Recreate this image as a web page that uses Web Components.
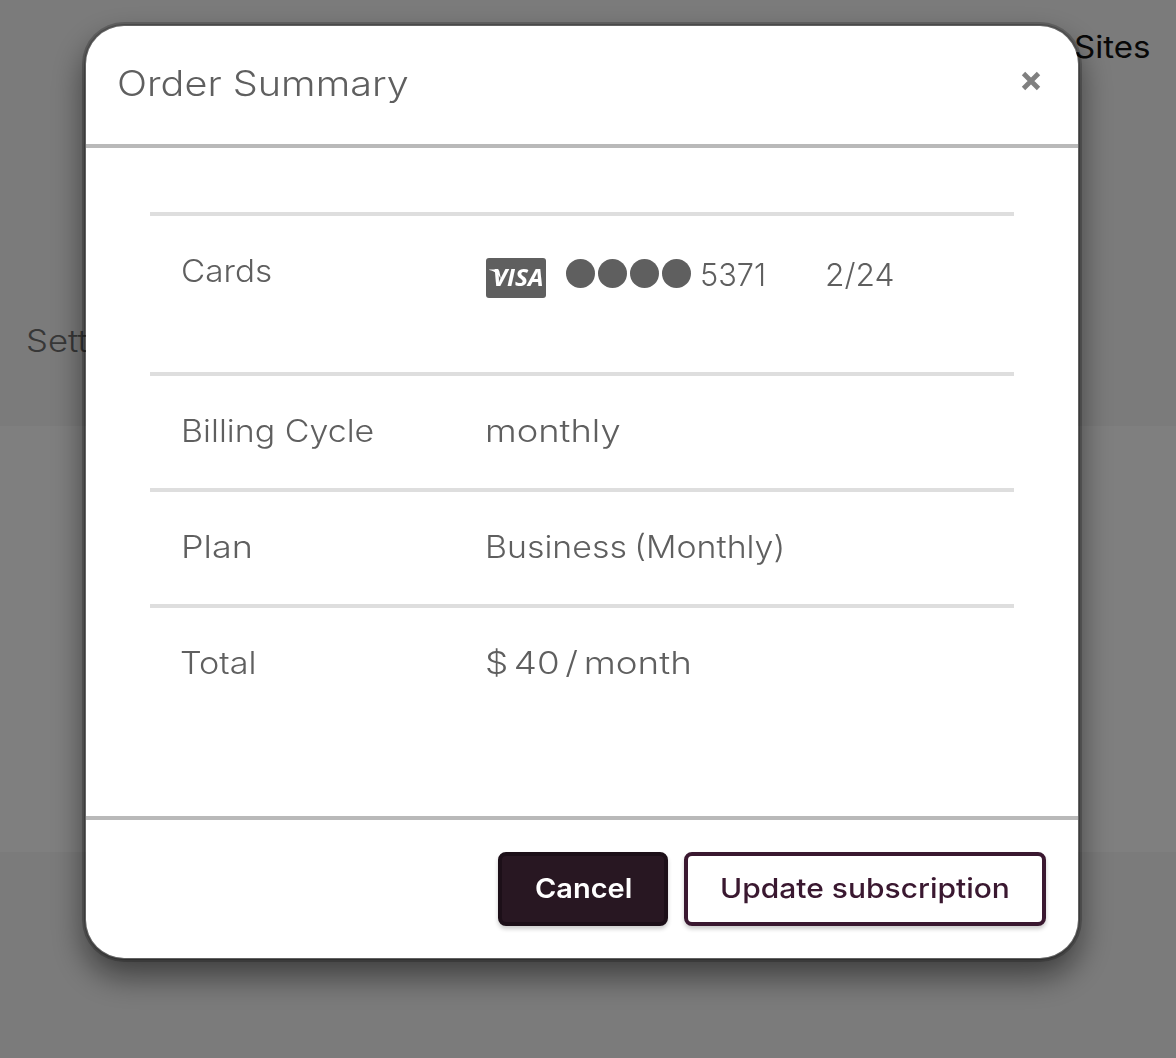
<!DOCTYPE html>
<html lang="en">
<head>
<meta charset="utf-8">
<title>Order Summary</title>
<style>
html, body { margin: 0; height: 100%; overflow: hidden; }
body { font-family: Inter, "Open Sans", "Liberation Sans", sans-serif; background: #f6f6f6; color: #5f5f5f; }
</style>
</head>
<body>
<account-page></account-page>
<order-dialog>
  <text-run slot="title" size="35" weight="300" ink="289" nudge="0.8" line="52">Order Summary</text-run>
  <summary-row label="Cards" label-ink="89" tall>
    <payment-card></payment-card>
  </summary-row>
  <summary-row label="Billing Cycle" label-ink="190"><text-run ink="133" nudge="1">monthly</text-run></summary-row>
  <summary-row label="Plan" label-ink="67"><text-run ink="295" nudge="1" word="-2">Business (Monthly)</text-run></summary-row>
  <summary-row label="Total" label-ink="73"><text-run ink="203" word="-4">$ 40 / month</text-run></summary-row>
  <action-button slot="actions" kind="solid"><text-run size="27.5" weight="600" ink="95" nudge="0.8" line="64">Cancel</text-run></action-button>
  <action-button slot="actions"><text-run size="27.5" weight="500" ink="286" nudge="0.8" line="64">Update subscription</text-run></action-button>
</order-dialog>

<script>
const pen = document.createElement('canvas').getContext('2d');

/* A line of text widened so that its drawn extent equals the `ink` attribute. */
class TextRun extends HTMLElement {
  connectedCallback() {
    if (this.shadowRoot) return;
    const size = +(this.getAttribute('size') || 31);
    const weight = this.getAttribute('weight') || 300;
    const line = this.getAttribute('line') || 48;
    const ink = +this.getAttribute('ink');
    const nudge = +(this.getAttribute('nudge') || 0);
    const word = +(this.getAttribute('word') || 0);
    const text = this.textContent;
    pen.font = `${weight} ${size}px Inter, "Open Sans", sans-serif`;
    const m = pen.measureText(text);
    const spaces = text.split(' ').length - 1;
    const drawn = m.actualBoundingBoxRight + m.actualBoundingBoxLeft + spaces * word;
    const scale = ink / drawn;
    const start = m.actualBoundingBoxLeft * scale + nudge + 0.5;
    this.attachShadow({ mode: 'open' }).innerHTML = `<style>
      :host { display: block; width: ${ink}px; white-space: nowrap; flex: none;
        font-size: ${size}px; font-weight: ${weight}; line-height: ${line}px; word-spacing: ${word}px; }
      span { display: block; width: max-content; margin-left: ${start.toFixed(2)}px;
        transform: scaleX(${scale.toFixed(4)}); transform-origin: 0 50%; }
    </style><span><slot></slot></span>`;
  }
}

class AccountPage extends HTMLElement {
  connectedCallback() {
    this.attachShadow({ mode: 'open' }).innerHTML = `<style>
      :host { display: flex; flex-direction: column; height: 100vh; }
      header { height: 426px; box-sizing: border-box; padding: 23px 27px 0 26px; background: #f6f6f6;
        display: flex; flex-direction: column; }
      nav { display: flex; justify-content: flex-end; color: #111; }
      .tab { padding-top: 246px; color: #6f6f6f; }
      main { height: 426px; background: #fff; }
      footer { flex: 1; background: #f6f6f6; }
    </style>
    <header><nav><text-run ink="74" weight="400">Sites</text-run></nav>
    <div class="tab"><text-run ink="127" nudge="0.5">Settings</text-run></div></header>
    <main></main><footer></footer>`;
  }
}

class OrderDialog extends HTMLElement {
  connectedCallback() {
    this.attachShadow({ mode: 'open' }).innerHTML = `<style>
      :host { display: flex; position: fixed; inset: 0; box-sizing: border-box; padding: 24px 96px 98px 84px;
        background: rgba(0,0,0,.5); }
      section { flex: 1; display: flex; flex-direction: column; box-sizing: border-box; background: #fff;
        background-clip: padding-box; border: 2px solid rgba(0,0,0,.2); border-radius: 40px;
        box-shadow: 0 0 0 2px rgba(0,0,0,.2), 0 16px 32px rgba(0,0,0,.5); }
      header { height: 122px; box-sizing: border-box; border-bottom: 4px solid #b9b9b9;
        display: flex; justify-content: space-between; align-items: flex-start; padding: 31px 37px 0 32px; }
      svg { display: block; margin-top: 14px; }
      .body { flex: 1; padding: 64px 64px 0; }
      footer { height: 142px; box-sizing: border-box; border-top: 4px solid #b9b9b9;
        display: flex; justify-content: flex-end; align-items: flex-start; gap: 16px; padding: 32px 32px 0; }
    </style>
    <section role="dialog">
      <header><slot name="title"></slot>
        <svg width="20" height="20" viewBox="0 0 20 20"><path d="M2.5 2.5 17.5 17.5M17.5 2.5 2.5 17.5" stroke="#808080" stroke-width="4.800" /></svg>
      </header>
      <div class="body"><slot></slot></div>
      <footer><slot name="actions"></slot></footer>
    </section>`;
  }
}

class SummaryRow extends HTMLElement {
  connectedCallback() {
    const label = this.getAttribute('label');
    const stem = /^[BP]/.test(label) ? 1 : /^T/.test(label) ? -1 : 0;
    this.attachShadow({ mode: 'open' }).innerHTML = `<style>
      :host { display: flex; box-sizing: border-box; height: 116px; border-top: 4px solid #dedede; padding: 31px 32px 0; }
      :host([tall]) { height: 160px; }
      .label { width: 304px; flex: none; }
    </style>
    <div class="label"><text-run ink="${this.getAttribute('label-ink')}" nudge="${stem}">${label}</text-run></div>
    <slot></slot>`;
  }
}

class PaymentCard extends HTMLElement {
  connectedCallback() {
    this.attachShadow({ mode: 'open' }).innerHTML = `<style>
      :host { display: flex; align-items: center; height: 48px; padding-top: 4px; }
      svg { display: block; margin: 6px 20.5px 0 0; }
      .dots { display: flex; gap: 3px; margin: -3px 10px 0 -0.3px; }
      i { width: 29px; height: 29px; border-radius: 50%; background: #5f5f5f; }
      .date { margin-left: 63px; }
    </style>
    <svg width="60" height="40" viewBox="0 0 60 40" role="img">
      <rect width="60" height="40" rx="3" fill="#5f5f5f"/>
      <path d="M3.2 11.4h7.6c1.5 0 2.3.8 2.6 2.2l1.5 7.4C12.7 16.2 9.2 13.1 3.2 11.9z" fill="#fff"/>
      <text x="6.5" y="28.4" textLength="51" lengthAdjust="spacingAndGlyphs" font-family="Open Sans" font-size="24" font-weight="700" font-style="italic" fill="#fff">VISA</text>
    </svg>
    <div class="dots"><i></i><i></i><i></i><i></i></div>
    <text-run ink="62">5371</text-run><text-run class="date" ink="66">2/24</text-run>`;
  }
}

class ActionButton extends HTMLElement {
  connectedCallback() {
    this.attachShadow({ mode: 'open' }).innerHTML = `<style>
      :host { display: block; }
      button { display: flex; align-items: flex-start; font: inherit; text-align: left; box-sizing: border-box; height: 74px; margin: 0; padding: 0 35px 0 33px;
        border: 4px solid #3a1830; border-radius: 8px; background: #fff; color: #3a1830;
        box-shadow: 0 3px 4px rgba(0,0,0,.2); }
      :host([kind=solid]) button { background: #281722; border-color: #1c0f18; color: #fff; padding: 0 34px 0 33px; }
    </style><button><slot></slot></button>`;
  }
}

customElements.define('text-run', TextRun);
customElements.define('account-page', AccountPage);
customElements.define('order-dialog', OrderDialog);
customElements.define('summary-row', SummaryRow);
customElements.define('payment-card', PaymentCard);
customElements.define('action-button', ActionButton);
</script>
</body>
</html>
